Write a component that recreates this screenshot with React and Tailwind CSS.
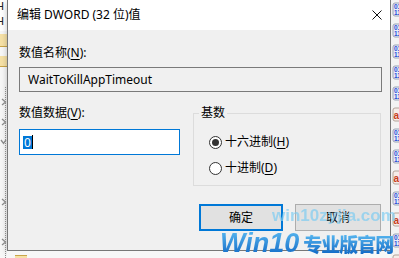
const binIcon = (
  <svg width="16" height="16" viewBox="0 0 16 16">
    <rect x="1" y="1" width="14" height="13" rx="2" fill="#e8eef8" stroke="#9aa4b4" strokeWidth="1" />
    <text x="2" y="7" fontSize="6.5" fontWeight="bold" fill="#2b4fd6" fontFamily="Liberation Sans">011</text>
    <text x="2" y="13" fontSize="6.5" fontWeight="bold" fill="#2b4fd6" fontFamily="Liberation Sans">110</text>
  </svg>
);
const abIcon = (
  <svg width="16" height="16" viewBox="0 0 16 16">
    <rect x="1" y="1" width="14" height="13" rx="2" fill="#f6ece8" stroke="#b4a49a" strokeWidth="1" />
    <text x="1.5" y="11.5" fontSize="10" fontWeight="bold" fill="#c8401c" fontFamily="Liberation Sans">ab</text>
  </svg>
);

function RightStrip() {
  const types = ["b", "b", "b", "b", "b", "r", "b", "b", "r", "b", "r", "b", "r"];
  return (
    <div className="flex w-[8px] flex-col gap-[5px] overflow-hidden bg-[#f3f3f3] pt-[2px]">
      {types.map((t, i) => (
        <div key={i} className="h-[16px] w-[8px] shrink-0 overflow-hidden pl-[1px]">
          {t === "b" ? binIcon : abIcon}
        </div>
      ))}
    </div>
  );
}

function Chevron() {
  return (
    <svg width="6" height="8" viewBox="0 0 6 8" className="ml-[1px]">
      <path d="M1 1 L4.5 4 L1 7" fill="none" stroke="#8a8a8a" strokeWidth="1.3" />
    </svg>
  );
}

function LeftStrip() {
  return (
    <div className="flex w-[7px] flex-col overflow-hidden bg-[#f7f7f7]">
      <div className="h-[15px] shrink-0 overflow-hidden bg-white">
        <span className="ml-[-4px] block font-['Liberation_Sans',sans-serif] text-[11px] leading-[13px] text-[#222]">H</span>
      </div>
      <div className="h-[16px] shrink-0 overflow-hidden bg-white">
        <span className="ml-[-4px] block font-['Liberation_Sans',sans-serif] text-[11px] leading-[13px] text-[#222]">H</span>
      </div>
      <div className="mt-[3px] h-[13px] shrink-0 border-b border-[#c9a54a] bg-[#f6e1a6]" />
      <div className="mt-[9px] h-[11px] shrink-0 border-b border-[#c9a54a] bg-[#f6e1a6]" />
      <div className="relative flex flex-1 flex-col">
        <div className="absolute bottom-0 left-[5px] top-[20px] border-l border-dotted border-[#8a8a8a]" />
        <div className="relative mt-[25px] flex h-[20px] items-center"><Chevron /></div>
        <div className="relative flex h-[20px] items-center"><Chevron /></div>
        <div className="relative flex h-[20px] items-center">
          <svg width="7" height="6" viewBox="0 0 7 6"><path d="M1 1 L3.5 4.5 L6 1" fill="none" stroke="#8a8a8a" strokeWidth="1.3" /></svg>
        </div>
        <div className="relative mt-[40px] flex h-[20px] items-center"><Chevron /></div>
        <div className="relative mt-[20px] flex h-[20px] items-center"><Chevron /></div>
      </div>
    </div>
  );
}

function Radio({ checked, label }) {
  return (
    <div className="flex items-center">
      <div className="flex h-[13px] w-[13px] items-center justify-center rounded-full border border-[#333] bg-white">
        {checked && <div className="h-[7px] w-[7px] rounded-full bg-[#333]" />}
      </div>
      <span className="ml-[3px] leading-[16px]">{label}</span>
    </div>
  );
}

function Dialog() {
  return (
    <div className="flex h-[251px] w-[384px] shrink-0 flex-col border-x border-b border-[#777] bg-[#f0f0f0] shadow-[0_2px_6px_rgba(0,0,0,0.25)]">
      <div className="flex h-[30px] shrink-0 items-center justify-between bg-white pl-[9px] pr-[8px]">
        <span className="leading-[16px]">编辑 DWORD (32 位)值</span>
        <svg width="10" height="10" viewBox="0 0 10 10">
          <path d="M0.5 0.5 L9.5 9.5 M9.5 0.5 L0.5 9.5" stroke="#111" strokeWidth="1" />
        </svg>
      </div>
      <div className="flex flex-1 flex-col pl-[11px] pr-[8px]">
        <div className="mt-[15px] leading-[16px]">
          数值名称(<span className="underline underline-offset-2">N</span>):
        </div>
        <div className="mt-[6px] flex h-[25px] items-center border border-[#7a7a7a] bg-[#f0f0f0] pl-[8px]">
          WaitToKillAppTimeout
        </div>
        <div className="mt-[13px] flex gap-[13px]">
          <div className="flex w-[161px] flex-col">
            <div className="leading-[16px]">
              数值数据(<span className="underline underline-offset-2">V</span>):
            </div>
            <div className="mt-[8px] flex h-[26px] items-center border border-[#0078d7] bg-white pl-[3px]">
              <span className="bg-[#0078d7] px-[1px] leading-[13px] text-white">0</span>
              <span className="h-[14px] w-[1px] bg-black" />
            </div>
          </div>
          <div className="relative mt-[8px] h-[73px] w-[188px] border border-[#dcdcdc]">
            <span className="absolute left-[5px] top-[-9px] bg-[#f0f0f0] px-[2px] leading-[16px]">基数</span>
            <div className="ml-[15px] mt-[20px] flex flex-col gap-[10px]">
              <Radio checked label={<>十六进制(<span className="underline underline-offset-2">H</span>)</>} />
              <Radio label={<>十进制(<span className="underline underline-offset-2">D</span>)</>} />
            </div>
          </div>
        </div>
        <div className="mt-[18px] flex justify-end gap-[12px] pr-[1px]">
          <div className="flex h-[27px] w-[84px] items-center justify-center border-2 border-[#0078d7] bg-[#e1e1e1]">确定</div>
          <div className="flex h-[27px] w-[86px] items-center justify-center border border-[#adadad] bg-[#e1e1e1]">取消</div>
        </div>
      </div>
    </div>
  );
}

function Watermark() {
  return (
    <>
      <div className="pointer-events-none absolute left-[272px] top-[206px] font-['Liberation_Sans',sans-serif] text-[17px] font-bold leading-[20px] text-[#7fcdf2] opacity-70">
        win10zyjia.com
      </div>
      <div className="pointer-events-none absolute left-[220px] top-[229px] flex items-end">
        <span className="bg-gradient-to-b from-[#5cbcf2] to-[#0b66c4] bg-clip-text font-['Liberation_Sans',sans-serif] text-[27px] font-bold italic leading-[28px] text-transparent">
          Win10
        </span>
        <span className="mb-[2px] ml-[4px] bg-gradient-to-b from-[#5cbcf2] to-[#0b66c4] bg-clip-text font-['Noto_Sans_CJK_SC',sans-serif] text-[19px] font-black leading-[22px] tracking-[-1px] text-transparent">
          专业版官网
        </span>
      </div>
    </>
  );
}

export default function App() {
  return (
    <div className="relative flex h-[258px] w-[399px] overflow-hidden bg-[#f7f7f7] font-['Noto_Sans','Noto_Sans_CJK_SC',sans-serif] text-[12px] text-black">
      <LeftStrip />
      <div className="flex w-[384px] flex-col">
        <Dialog />
        <div className="flex flex-1 items-end bg-[#f7f7f7] pl-[8px]">
          <div className="h-[3px] w-[12px] border-t border-[#c9a54a] bg-[#f6e1a6]" />
        </div>
      </div>
      <RightStrip />
      <Watermark />
    </div>
  );
}
